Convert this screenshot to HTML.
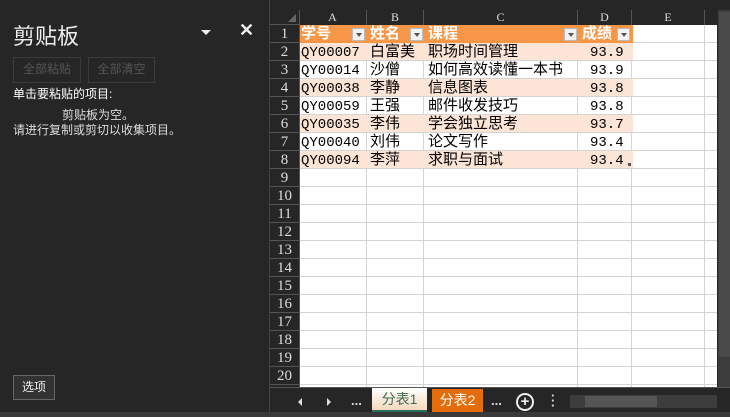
<!DOCTYPE html><html><head><meta charset="utf-8"><style>
body{margin:0;width:730px;height:417px;background:#262626;position:relative;overflow:hidden;font-family:"Liberation Sans","Noto Sans CJK SC",sans-serif;}
.a{position:absolute;}
.cell{position:absolute;font-size:14px;line-height:18px;white-space:nowrap;font-family:"Liberation Mono","Noto Sans CJK SC",monospace;}
.rh{position:absolute;left:270px;width:29px;text-align:center;color:#ddd;font-size:15px;line-height:18px;font-family:"Liberation Serif",serif;border-bottom:1px solid #555;box-sizing:border-box;height:18px;}
.ch{position:absolute;top:10px;height:15px;color:#ddd;font-size:12px;line-height:15px;text-align:center;font-family:"Liberation Serif",serif;border-right:1px solid #555;box-sizing:border-box;}
.dd{position:absolute;width:13px;height:13px;background:#f2f2f2;border:1px solid #bbb;box-sizing:border-box;}
.dd:after{content:"";position:absolute;left:3px;top:4px;border:3px solid transparent;border-top:4px solid #555;}
.btn{position:absolute;border:1px solid #3a3a3a;color:#555;font-size:12px;line-height:22px;text-align:center;}
</style></head><body>
<div class="a" style="left:13px;top:19px;color:#eee;font-size:22px;">剪贴板</div>
<div class="a" style="left:201px;top:30px;border:5px solid transparent;border-top:5px solid #eee;"></div>
<div class="a" style="left:239px;top:20px;color:#eee;font-size:18px;font-weight:bold;">✕</div>
<div class="btn" style="left:13px;top:57px;width:66px;height:24px;">全部粘贴</div>
<div class="btn" style="left:88px;top:57px;width:65px;height:24px;">全部清空</div>
<div class="a" style="left:13px;top:85px;color:#fff;font-size:12px;">单击要粘贴的项目:</div>
<div class="a" style="left:62px;top:106px;color:#ddd;font-size:12px;">剪贴板为空。</div>
<div class="a" style="left:13px;top:121px;color:#ddd;font-size:12px;">请进行复制或剪切以收集项目。</div>
<div class="a" style="left:13px;top:375px;width:40px;height:23px;border:1px solid #666;background:#333;color:#eee;font-size:12px;line-height:23px;text-align:center;">选项</div>
<div class="a" style="left:269px;top:0;width:1px;height:417px;background:#444;"></div>
<div class="a" style="left:299px;top:25px;width:418px;height:362px;background:#fff;
background-image:linear-gradient(#d4d4d4,#d4d4d4),linear-gradient(#d4d4d4,#d4d4d4),linear-gradient(#d4d4d4,#d4d4d4),linear-gradient(#d4d4d4,#d4d4d4),linear-gradient(#d4d4d4,#d4d4d4),repeating-linear-gradient(to bottom,transparent 0 17px,#d4d4d4 17px 18px);
background-size:1px 100%,1px 100%,1px 100%,1px 100%,1px 100%,100% 100%;background-position:67px 0,124px 0,278px 0,332px 0,405px 0,0 0;background-repeat:no-repeat;"></div>
<div class="a" style="left:299px;top:25px;width:334px;height:18px;background:#f79646;"></div>
<div class="a" style="left:299px;top:43px;width:334px;height:17px;background:#fce4d6;"></div>
<div class="a" style="left:299px;top:79px;width:334px;height:17px;background:#fce4d6;"></div>
<div class="a" style="left:299px;top:115px;width:334px;height:17px;background:#fce4d6;"></div>
<div class="a" style="left:299px;top:151px;width:334px;height:17px;background:#fce4d6;"></div>
<div class="a" style="left:299px;top:10px;width:1px;height:377px;background:#555;"></div>
<div class="a" style="left:270px;top:10px;width:29px;height:15px;border-bottom:1px solid #555;box-sizing:border-box;"></div>
<div class="a" style="left:288px;top:14px;border-left:8px solid transparent;border-bottom:8px solid #666;"></div>
<div class="ch" style="left:299px;width:68px;">A</div><div class="ch" style="left:367px;width:57px;">B</div><div class="ch" style="left:424px;width:154px;">C</div><div class="ch" style="left:578px;width:54px;">D</div><div class="ch" style="left:632px;width:73px;">E</div>
<div class="rh" style="top:25px">1</div><div class="rh" style="top:43px">2</div><div class="rh" style="top:61px">3</div><div class="rh" style="top:79px">4</div><div class="rh" style="top:97px">5</div><div class="rh" style="top:115px">6</div><div class="rh" style="top:133px">7</div><div class="rh" style="top:151px">8</div><div class="rh" style="top:169px">9</div><div class="rh" style="top:187px">10</div><div class="rh" style="top:205px">11</div><div class="rh" style="top:223px">12</div><div class="rh" style="top:241px">13</div><div class="rh" style="top:259px">14</div><div class="rh" style="top:277px">15</div><div class="rh" style="top:295px">16</div><div class="rh" style="top:313px">17</div><div class="rh" style="top:331px">18</div><div class="rh" style="top:349px">19</div><div class="rh" style="top:367px">20</div>
<div class="cell" style="left:301px;top:26px;color:#fff;font-weight:bold;font-size:15px;">学号</div>
<div class="cell" style="left:370px;top:26px;color:#fff;font-weight:bold;font-size:15px;">姓名</div>
<div class="cell" style="left:428px;top:26px;color:#fff;font-weight:bold;font-size:15px;">课程</div>
<div class="cell" style="left:582px;top:26px;color:#fff;font-weight:bold;font-size:15px;">成绩</div>
<div class="dd" style="left:352px;top:28px"></div><div class="dd" style="left:410px;top:28px"></div><div class="dd" style="left:564px;top:28px"></div><div class="dd" style="left:617px;top:28px"></div>
<div style="position:absolute;left:301px;top:44px;" class="cell">QY00007<br>QY00014<br>QY00038<br>QY00059<br>QY00035<br>QY00040<br>QY00094</div>
<div style="position:absolute;left:370px;top:44px;font-size:15px;" class="cell">白富美<br>沙僧<br>李静<br>王强<br>李伟<br>刘伟<br>李萍</div>
<div style="position:absolute;left:428px;top:44px;font-size:15px;" class="cell">职场时间管理<br>如何高效读懂一本书<br>信息图表<br>邮件收发技巧<br>学会独立思考<br>论文写作<br>求职与面试</div>
<div style="position:absolute;left:590px;top:44px;" class="cell">93.9<br>93.9<br>93.8<br>93.8<br>93.7<br>93.4<br>93.4</div>
<div class="a" style="left:628px;top:163px;width:3px;height:3px;background:#555;"></div>
<div class="a" style="left:718px;top:10px;width:12px;height:378px;background:#3c3c3c;"></div>
<div class="a" style="left:719px;top:12px;width:11px;height:345px;background:#4a4a4a;"></div>
<div class="a" style="left:270px;top:387px;width:460px;height:25px;background:#262626;border-top:1px solid #555;box-sizing:border-box;"></div>
<div class="a" style="left:0;top:412px;width:730px;height:5px;background:#3a3a3a;"></div>
<div class="a" style="left:298px;top:398px;border:4px solid transparent;border-right:4px solid #ddd;border-left:0;"></div>
<div class="a" style="left:327px;top:398px;border:4px solid transparent;border-left:4px solid #ddd;border-right:0;"></div>
<div class="a" style="left:351px;top:393px;color:#ddd;font-size:13px;font-weight:bold;">...</div>
<div class="a" style="left:372px;top:388px;width:55px;height:22px;background:linear-gradient(#fff,#f4d8bc);border-bottom:2px solid #2f6f5f;color:#3d6b55;font-size:14px;line-height:22px;text-align:center;">分表1</div>
<div class="a" style="left:432px;top:389px;width:51px;height:23px;background:#e46c0a;color:#fff;font-size:14px;line-height:22px;text-align:center;">分表2</div>
<div class="a" style="left:491px;top:393px;color:#ddd;font-size:13px;font-weight:bold;">...</div>
<div class="a" style="left:516px;top:393px;width:14px;height:14px;border:2px solid #eee;border-radius:50%;color:#eee;font-size:15px;line-height:14px;text-align:center;font-weight:bold;">+</div>
<div class="a" style="left:551px;top:393px;color:#ddd;font-size:13px;font-weight:bold;line-height:5px;">·<br>·<br>·</div>
<div class="a" style="left:570px;top:395px;width:147px;height:13px;background:#3c3c3c;"></div>
<div class="a" style="left:585px;top:396px;width:72px;height:11px;background:#555;"></div>
</body></html>
